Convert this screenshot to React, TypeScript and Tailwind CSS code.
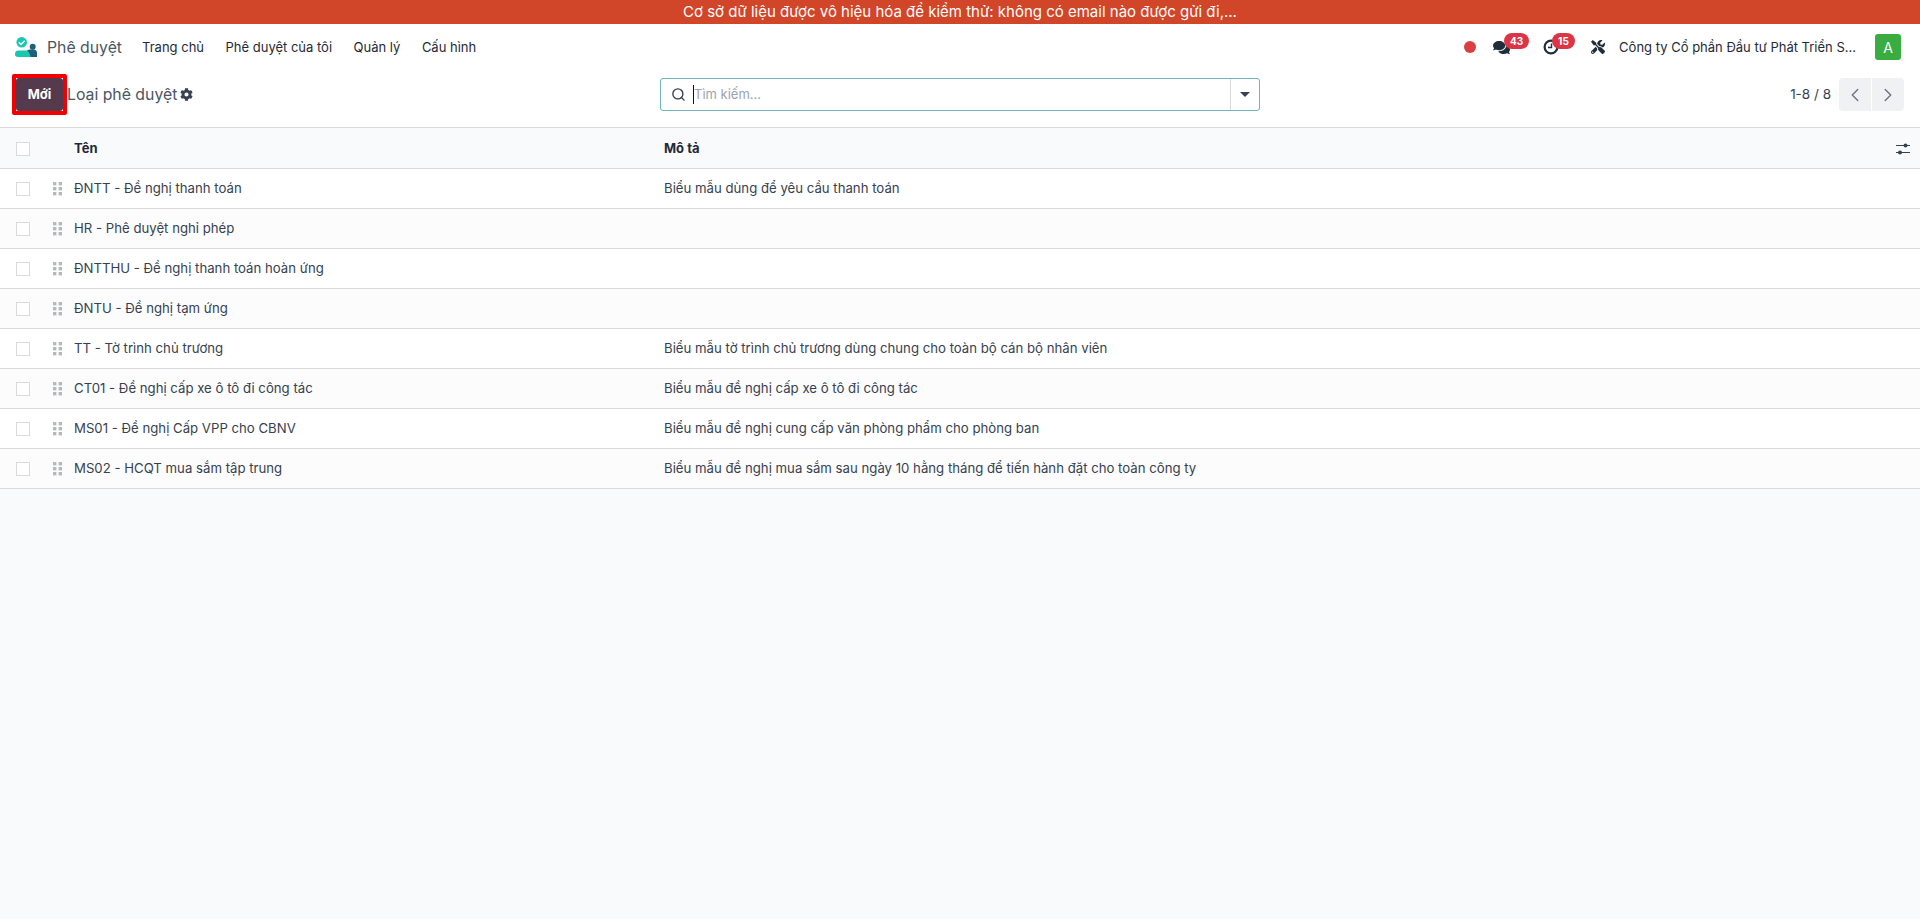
import { ChevronLeft, ChevronRight, Search } from 'lucide-react'
import { FaCog, FaComments, FaTools } from 'react-icons/fa'

const rows = [
  ['ĐNTT - Đề nghị thanh toán', 'Biểu mẫu dùng để yêu cầu thanh toán'],
  ['HR - Phê duyệt nghỉ phép', ''],
  ['ĐNTTHU - Đề nghị thanh toán hoàn ứng', ''],
  ['ĐNTU - Đề nghị tạm ứng', ''],
  ['TT - Tờ trình chủ trương', 'Biểu mẫu tờ trình chủ trương dùng chung cho toàn bộ cán bộ nhân viên'],
  ['CT01 - Đề nghị cấp xe ô tô đi công tác', 'Biểu mẫu đề nghị cấp xe ô tô đi công tác'],
  ['MS01 - Đề nghị Cấp VPP cho CBNV', 'Biểu mẫu đề nghị cung cấp văn phòng phẩm cho phòng ban'],
  ['MS02 - HCQT mua sắm tập trung', 'Biểu mẫu đề nghị mua sắm sau ngày 10 hằng tháng để tiến hành đặt cho toàn công ty'],
]

function Grip() {
  return (
    <svg width="10" height="14" viewBox="0 0 10 14" className="fill-[#b5b8bd]">
      <rect x="0" y="0" width="3.4" height="3.4" />
      <rect x="5.6" y="0" width="3.4" height="3.4" />
      <rect x="0" y="5" width="3.4" height="3.4" />
      <rect x="5.6" y="5" width="3.4" height="3.4" />
      <rect x="0" y="10" width="3.4" height="3.4" />
      <rect x="5.6" y="10" width="3.4" height="3.4" />
    </svg>
  )
}

function Logo() {
  return (
    <svg width="22" height="20" viewBox="0 0 22 20">
      <circle cx="6.700" cy="5.300" r="5.300" fill="#17c7b0" />
      <path d="M3.800 5.300l2.200 2.200 3.700-3.800" stroke="#fff" strokeWidth="1.500" fill="none" />
      <path d="M0 17c0-2.500 1.500-3.500 3.500-3.500h9c2.500 0 3.500 2 4 6.500H3c-2 0-3-1-3-3z" fill="#17c7b0" />
      <circle cx="17.700" cy="9.700" r="3" fill="#1f5f7a" />
      <path d="M12 13.500c1-.6 2.500-1 4-1h2.500c2.300 0 3.500 1.500 3.500 3.500v4h-6.500c-.5-3-1.500-5.500-3.500-6.500z" fill="#1f5f7a" />
    </svg>
  )
}

function Badge({ n, left }: { n: number; left: string }) {
  return (
    <span className={`absolute -top-[6px] ${left} bg-[#dc3545] text-white text-[10px] font-bold rounded-full px-[6px] leading-[16px]`}>
      {n}
    </span>
  )
}

export default function App() {
  return (
    <div className='font-["Inter","Noto_Sans_CJK_SC",sans-serif] min-h-[919px] bg-[#f9fafb] text-[13px] text-[#374151]'>
      <div className="h-6 bg-[#d14529] text-white text-center text-[15px] leading-6">
        Cơ sở dữ liệu được vô hiệu hóa để kiểm thử: không có email nào được gửi đi,...
      </div>

      <div className="h-[46px] bg-white flex items-center pl-[15px] pr-[19px]">
        <Logo />
        <span className="ml-[10px] pt-px text-[15.8px] text-[#4b5563]">Phê duyệt</span>
        <nav className="flex ml-[20px] pt-[2px] gap-[21.5px] text-[#1f2937]">
          <span>Trang chủ</span>
          <span>Phê duyệt của tôi</span>
          <span>Quản lý</span>
          <span>Cấu hình</span>
        </nav>
        <div className="ml-auto flex items-center">
          <span className="w-3 h-3 rounded-full bg-[#d9403f]" />
          <div className="relative ml-[17px]">
            <FaComments size={17} className="text-[#1f2d3d]" />
            <Badge n={43} left="left-[11px]" />
          </div>
          <div className="relative ml-[33px]">
            <svg width="16" height="16" viewBox="0 0 16 16" fill="none" stroke="#1f2d3d" strokeWidth="2.200">
              <circle cx="8" cy="8" r="6.400" />
              <path d="M8.500 4.500V8.500H5" strokeWidth="1.400" />
            </svg>
            <Badge n={15} left="left-[9px]" />
          </div>
          <FaTools size={14} className="ml-[32px] text-[#1f2d3d]" />
          <span className="ml-[14px] pt-[2px] text-[#1f2937]">Công ty Cổ phần Đầu tư Phát Triển S...</span>
          <span className="ml-[19px] w-[26px] h-[26px] rounded-[3px] bg-[#3aad40] text-white flex items-center justify-center text-[14px]">A</span>
        </div>
      </div>

      <div className="h-[57px] bg-white flex items-center pl-[12px] pr-[16px] pb-2">
        <div className="flex items-center w-[648px] shrink-0">
          <div className="border-[4px] border-[#f00000] rounded-[2px] bg-white">
            <button className="block w-[47px] h-[33px] rounded-[3px] bg-[#553a4e] text-white font-bold text-[13px]">Mới</button>
          </div>
          <span className="text-[15.8px] text-[#4b5563]">Loại phê duyệt</span>
          <FaCog size={13} className="ml-[3px] text-[#374151]" />
        </div>
        <div className="w-[600px] h-[33px] border border-[#6fb5bd] rounded-[3px] flex items-center bg-white">
          <Search size={15} strokeWidth={2.200} className="ml-[10px] text-[#374151]" />
          <span className="ml-[7px] w-px h-[19px] bg-[#111]" />
          <span className="text-[#9ca3af]">Tìm kiếm...</span>
          <div className="ml-auto w-[29px] h-full border-l border-[#d8dadd] flex items-center justify-center">
            <span className="border-x-[5px] border-x-transparent border-t-[5px] border-t-[#374151]" />
          </div>
        </div>
        <div className="ml-auto flex items-center">
          <span className="text-[13.5px]">1-8 / 8</span>
          <div className="ml-2 flex gap-px">
            <span className="w-[32px] h-[33px] bg-[#f0f1f3] rounded-l-[4px] flex items-center justify-center">
              <ChevronLeft size={22} strokeWidth={1.500} className="text-[#6b7280]" />
            </span>
            <span className="w-[32px] h-[33px] bg-[#f0f1f3] rounded-r-[4px] flex items-center justify-center">
              <ChevronRight size={22} strokeWidth={1.500} className="text-[#6b7280]" />
            </span>
          </div>
        </div>
      </div>

      <div className="h-[42px] pt-px flex items-center bg-[#f9fafb] border-y border-[#d8dadd] font-bold text-[#1f2937]">
        <span className="ml-4 w-[14px] h-[14px] border border-[#d8dadd] bg-white" />
        <span className="ml-[44px] w-[590px]">Tên</span>
        <span>Mô tả</span>
        <svg width="14" height="12" viewBox="0 0 14 12" className="ml-auto mr-[10px]" fill="#374151" stroke="#374151">
          <path d="M0 2.500h14M0 9.500h14" strokeWidth="1" />
          <circle cx="9.500" cy="2.500" r="2" stroke="none" />
          <circle cx="4" cy="9.500" r="2" stroke="none" />
        </svg>
      </div>

      {rows.map((row, i) => (
        <div key={i} className={`h-10 flex items-center border-b border-[#d8dadd] text-[13.2px] ${i % 2 === 1 ? 'bg-[#fcfcfc]' : 'bg-white'}`}>
          <span className="ml-4 w-[14px] h-[14px] border border-[#d8dadd] bg-white" />
          <span className="ml-[23px] w-[21px]"><Grip /></span>
          <span className="w-[590px]">{row[0]}</span>
          <span>{row[1]}</span>
        </div>
      ))}
    </div>
  )
}
